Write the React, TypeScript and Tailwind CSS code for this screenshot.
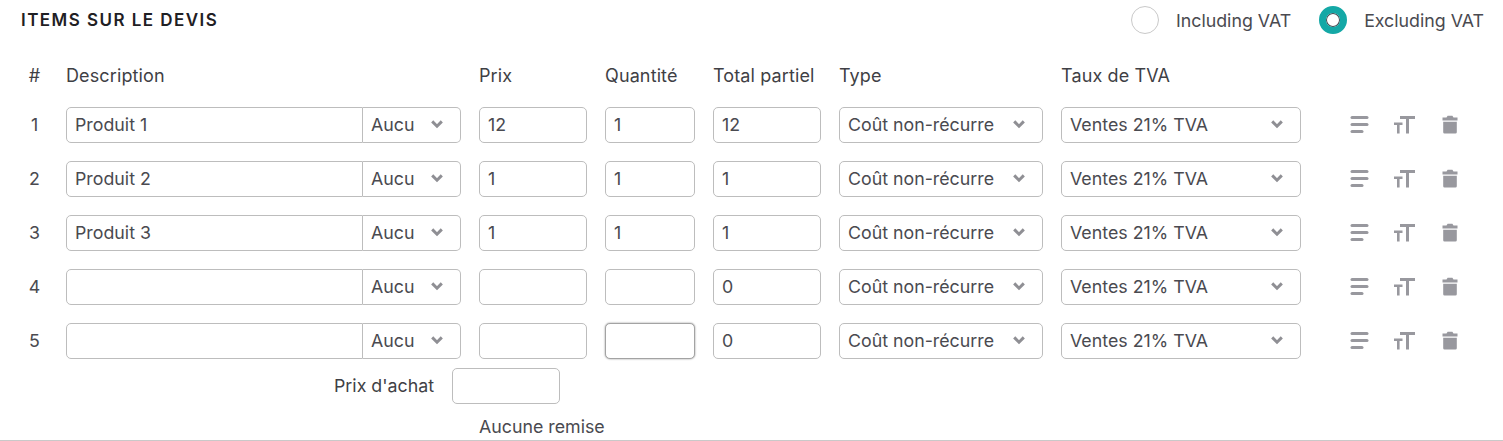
import React from "react";

const rows = [
  { id: 1, name: "Produit 1", price: "12", qty: "1", total: "12" },
  { id: 2, name: "Produit 2", price: "1", qty: "1", total: "1" },
  { id: 3, name: "Produit 3", price: "1", qty: "1", total: "1" },
  { id: 4, name: "", price: "", qty: "", total: "0" },
  { id: 5, name: "", price: "", qty: "", total: "0" },
];

const Chevron = () => (
  <svg width="14" height="14" viewBox="0 0 14 14" className="shrink-0 -translate-y-[1px]">
    <path d="M2.2 4.4 L7 9.2 L11.8 4.4" fill="none" stroke="#8f8f94" strokeWidth="3" />
  </svg>
);

const Field = ({ value, className, focus }: { value: string; className: string; focus?: boolean }) => (
  <div
    className={`h-[36px] shrink-0 rounded-[5px] border bg-white px-2 flex items-center ${
      focus ? "border-[#a3a3a3] shadow-[0_0_2px_#8a8a8a]" : "border-[#bdbdbd]"
    } ${className}`}
  >
    {value}
  </div>
);

const Select = ({ value, className }: { value: string; className: string }) => (
  <div className={`h-[36px] shrink-0 rounded-[5px] border border-[#bdbdbd] bg-white pl-2 pr-[16px] flex items-center justify-between ${className}`}>
    <span>{value}</span>
    <Chevron />
  </div>
);

const Icons = () => (
  <div className="flex items-center ml-[49px] gap-[24px]">
    <svg width="19" height="20" viewBox="0 0 19 20">
      <rect x="0.5" y="1" width="18" height="3" rx="1.5" fill="#98989e" />
      <rect x="0.5" y="8" width="18" height="3" rx="1.5" fill="#98989e" />
      <rect x="0.5" y="15" width="13" height="3" rx="1.5" fill="#98989e" />
    </svg>
    <svg width="22" height="20" viewBox="0 0 22 20">
      <path d="M7 1h15v3h-6V18.5h-3V4H7z" fill="#98989e" />
      <path d="M1 7.5h8.5V10H6.6v8.5H4V10H1z" fill="#98989e" />
    </svg>
    <svg width="18" height="20" viewBox="0 0 18 20" className="ml-[2px]">
      <path d="M5.5 2.4 6.6 0.8h4.8L12.5 2.4h4v3.2h-15V2.4z" fill="#98989e" />
      <path d="M2.2 6.8h13.6v10.4a1.4 1.4 0 0 1-1.4 1.4H3.6a1.4 1.4 0 0 1-1.4-1.4z" fill="#98989e" />
    </svg>
  </div>
);

export default function App() {
  return (
    <div className="w-[1503px] h-[441px] overflow-hidden bg-white font-['Inter',sans-serif] text-[17.8px] text-[#4a4a50]">
      <div className="flex items-center justify-between pl-[21px] pr-[19px] h-[41px]">
        <h2 className="text-[17px] font-semibold tracking-[1.45px] text-[#1f2024]">ITEMS SUR LE DEVIS</h2>
        <div className="flex items-center">
          <span className="w-[28px] h-[28px] -translate-y-[1px] rounded-full border border-[#c9c9c9] bg-white" />
          <span className="ml-[17px] translate-y-[1px]">Including VAT</span>
          <span className="ml-[28px] w-[28px] h-[28px] -translate-y-[1px] rounded-full border-[7px] border-[#14a8a6] bg-white shadow-[inset_0_0_0_1px_#44444c]" />
          <span className="ml-[17px] translate-y-[1px]">Excluding VAT</span>
        </div>
      </div>

      <div className="flex items-center gap-[18px] pl-[21px] h-[30px] mt-[19px] text-[18px] tracking-[0.12px] text-[#3f3f45]">
        <div className="w-[27px] text-center">#</div>
        <div className="w-[395px]">Description</div>
        <div className="w-[108px]">Prix</div>
        <div className="w-[90px]">Quantité</div>
        <div className="w-[108px] whitespace-nowrap">Total partiel</div>
        <div className="w-[204px]">Type</div>
        <div className="w-[240px]">Taux de TVA</div>
      </div>

      <div className="mt-[17px] flex flex-col gap-[18px]">
        {rows.map((r) => (
          <div key={r.id} className="flex items-center gap-[18px] pl-[21px]">
            <div className="w-[27px] text-center">{r.id}</div>
            <div className="flex w-[395px]">
              <div className="h-[36px] w-[297px] rounded-l-[5px] border border-[#bdbdbd] px-2 flex items-center">{r.name}</div>
              <div className="h-[36px] w-[98px] rounded-r-[5px] border border-l-0 border-[#bdbdbd] pl-2 pr-[16px] flex items-center justify-between">
                <span>Aucu</span>
                <Chevron />
              </div>
            </div>
            <Field value={r.price} className="w-[108px]" />
            <Field value={r.qty} className="w-[90px]" focus={r.id === 5} />
            <Field value={r.total} className="w-[108px]" />
            <Select value="Coût non-récurre" className="w-[204px]" />
            <Select value="Ventes 21% TVA" className="w-[240px]" />
            <div className="-ml-[18px]">
              <Icons />
            </div>
          </div>
        ))}
      </div>

      <div className="flex items-center pl-[334px] mt-[9px]">
        <span className="w-[118px] text-[#3f3f45]">Prix d'achat</span>
        <Field value="" className="w-[108px]" />
      </div>
      <div className="pl-[479px] h-[36px] pt-[10px] flex items-center">Aucune remise</div>
      <div className="h-px bg-[#c9c9c9]" />
    </div>
  );
}
